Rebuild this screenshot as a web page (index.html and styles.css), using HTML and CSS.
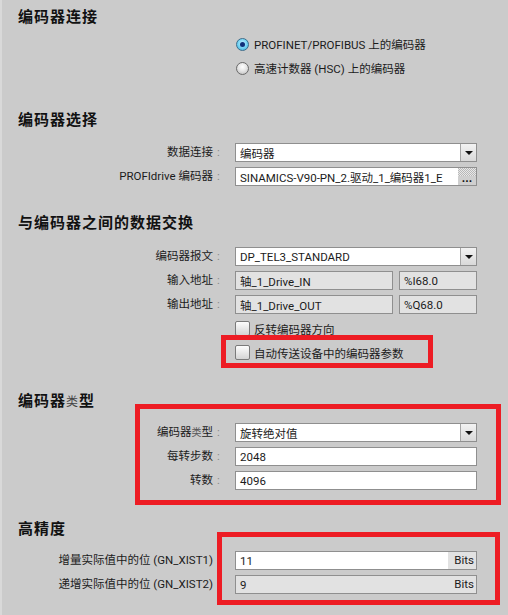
FILE: index.html
```html
<!DOCTYPE html>
<html lang="zh">
<head>
<meta charset="utf-8">
<link rel="stylesheet" href="styles.css">
</head>
<body>
<div class="page">
  <section class="sec s1">
    <h2 class="hd">编码器连接</h2>
    <div class="radios">
      <div class="opt"><span class="radio on"></span><span>PROFINET/PROFIBUS 上的编码器</span></div>
      <div class="opt"><span class="radio"></span><span>高速计数器 (HSC) 上的编码器</span></div>
    </div>
  </section>

  <section class="sec s2">
    <h2 class="hd">编码器选择</h2>
    <div class="form">
      <span class="lbl">数据连接</span><span class="colon">:</span>
      <div class="field select"><span class="val">编码器</span><span class="btn"><span class="arrow"></span></span></div>
      <span class="lbl">PROFIdrive 编码器</span><span class="colon">:</span>
      <div class="field"><span class="val clip">SINAMICS-V90-PN_2.驱动_1_编码器1_E</span><span class="dots">...</span></div>
    </div>
  </section>

  <section class="sec s3">
    <h2 class="hd">与编码器之间的数据交换</h2>
    <div class="form">
      <span class="lbl">编码器报文</span><span class="colon">:</span>
      <div class="field select"><span class="val">DP_TEL3_STANDARD</span><span class="btn"><span class="arrow"></span></span></div>
      <span class="lbl">输入地址</span><span class="colon">:</span>
      <div class="pair"><div class="field dis"><span class="val">轴_1_Drive_IN</span></div><div class="field dis small"><span class="val">%I68.0</span></div></div>
      <span class="lbl">输出地址</span><span class="colon">:</span>
      <div class="pair"><div class="field dis"><span class="val">轴_1_Drive_OUT</span></div><div class="field dis small"><span class="val">%Q68.0</span></div></div>
      <span class="lbl"></span><span class="colon"></span>
      <div class="check"><span class="box"></span><span>反转编码器方向</span></div>
      <span class="lbl"></span><span class="colon"></span>
      <div class="check"><span class="box"></span><span>自动传送设备中的编码器参数</span></div>
    </div>
    <div class="mark m1"></div>
  </section>

  <section class="sec s4">
    <h2 class="hd">编码器<span class="odd">类</span>型</h2>
    <div class="form">
      <span class="lbl">编码器<span class="odd-s">类</span>型</span><span class="colon">:</span>
      <div class="field select"><span class="val">旋转绝对值</span><span class="btn"><span class="arrow"></span></span></div>
      <span class="lbl">每转步数</span><span class="colon">:</span>
      <div class="field"><span class="val">2048</span></div>
      <span class="lbl">转数</span><span class="colon">:</span>
      <div class="field"><span class="val">4096</span></div>
    </div>
    <div class="mark m2"></div>
  </section>

  <section class="sec s5">
    <h2 class="hd">高精度</h2>
    <div class="form">
      <span class="lbl">增量实际值中的位 (GN_XIST1)</span><span class="colon"></span>
      <div class="field"><span class="val">11</span><span class="unit">Bits</span></div>
      <span class="lbl">递增实际值中的位 (GN_XIST2)</span><span class="colon"></span>
      <div class="field dis"><span class="val">9</span><span class="unit">Bits</span></div>
    </div>
    <div class="mark m3"></div>
  </section>
</div>
</body>
</html>
```

FILE: styles.css
```css
* { box-sizing: border-box; }
html, body {
  margin: 0;
  padding: 0;
}
body {
  width: 508px;
  height: 615px;
  overflow: hidden;
  background: #cbcbcb;
  box-shadow: inset 2px 0 0 #d9d9d9;
  font-family: Roboto, "Noto Sans CJK SC", sans-serif;
  font-size: 11.5px;
  color: #1b1b1b;
}
.page {
  padding-top: 6px;
}
.sec {
  position: relative;
}
.hd {
  margin: 0;
  padding-left: 18px;
  height: 20px;
  line-height: 20px;
  font-family: "Noto Sans CJK SC", sans-serif;
  font-size: 15px;
  font-weight: 700;
  letter-spacing: 1px;
  color: #111;
}
.odd {
  font-size: 12px;
  font-weight: 400;
  color: #444;
}
.odd-s {
  font-size: 10px;
  color: #555;
}
.radios {
  margin-top: 6px;
  margin-left: 236px;
}
.opt {
  height: 24px;
  display: flex;
  align-items: center;
  gap: 5px;
}
.radio {
  width: 13px;
  height: 13px;
  border-radius: 50%;
  border: 1px solid #6a6a6a;
  background: radial-gradient(circle at 50% 35%, #ffffff 0%, #e6e6e6 45%, #b9b9b9 100%);
  display: inline-flex;
  align-items: center;
  justify-content: center;
}
.radio.on {
  border-color: #3b6d8c;
  background: radial-gradient(circle at 50% 40%, #c9f1ff 0%, #6fd1f2 55%, #3aa8d6 100%);
}
.radio.on::after {
  content: "";
  width: 5px;
  height: 5px;
  border-radius: 50%;
  background: #10307a;
}
.s2 { margin-top: 29px; }
.s3 { margin-top: 26px; }
.s4 { margin-top: 28px; }
.s5 { margin-top: 28px; }
.form {
  margin-left: 18px;
  margin-top: 14px;
  display: grid;
  grid-template-columns: 195px 22px 242px;
  grid-auto-rows: 19px;
  row-gap: 5px;
  align-items: center;
}
.s3 .form { margin-top: 15px; }
.s4 .form, .s5 .form { margin-top: 13px; }
.lbl {
  text-align: right;
  white-space: nowrap;
  line-height: 19px;
}
.colon {
  padding-left: 4px;
  color: #888;
  line-height: 19px;
}
.field {
  height: 19px;
  border: 1px solid #8f8f8f;
  background: #fff;
  display: flex;
  align-items: center;
  overflow: hidden;
}
.field.dis {
  background: #e2e2e2;
}
.val {
  flex: 1;
  min-width: 0;
  padding-left: 4px;
  white-space: nowrap;
  overflow: hidden;
}
.btn {
  width: 16px;
  height: 17px;
  border-left: 1px solid #a5a5a5;
  background: linear-gradient(#f2f2f2, #d9d9d9);
  display: flex;
  align-items: center;
  justify-content: center;
}
.arrow {
  width: 0;
  height: 0;
  border-left: 4px solid transparent;
  border-right: 4px solid transparent;
  border-top: 4px solid #111;
}
.dots {
  width: 18px;
  height: 17px;
  background:
    linear-gradient(#cfcfcf, #cfcfcf) 0 100% / 100% 9px no-repeat,
    repeating-conic-gradient(#e8e8e8 0 25%, #b8b8b8 0 50%) 0 0 / 2px 2px;
  font-weight: 700;
  font-size: 12px;
  line-height: 17px;
  text-align: center;
  padding-top: 2px;
  color: #111;
  background-color: #ddd;
}
.pair {
  display: flex;
  gap: 6px;
  height: 19px;
}
.pair .field { flex: 1; }
.pair .field.small { flex: 0 0 78px; }
.check {
  display: flex;
  align-items: center;
  gap: 4px;
  height: 19px;
}
.box {
  width: 15px;
  height: 15px;
  border: 1px solid #7a7a7a;
  border-radius: 2px;
  background: linear-gradient(#fdfdfd, #d4d4d4);
}
.unit {
  width: 28px;
  height: 17px;
  line-height: 17px;
  background: #e2e2e2;
  text-align: right;
  padding-right: 2px;
}
.mark {
  position: absolute;
  border: 5px solid #ed1c24;
  pointer-events: none;
}
.m1 { left: 221px; top: 123px; width: 212px; height: 33px; }
.m2 { left: 135px; top: 14px; width: 366px; height: 101px; }
.m3 { left: 217px; top: 14px; width: 283px; height: 73px; }
```
